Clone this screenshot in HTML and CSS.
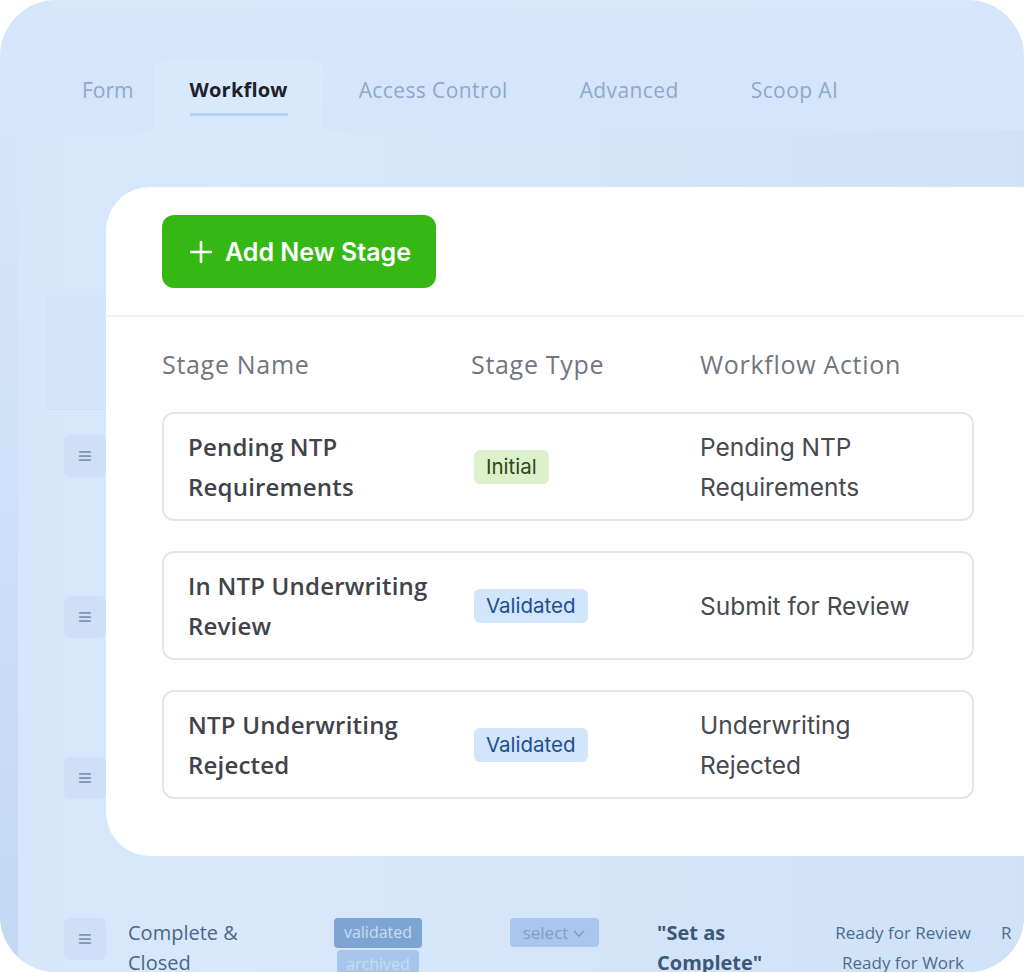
FILE: index.html
```html
<!DOCTYPE html>
<html lang="en">
<head>
  <meta charset="UTF-8" />
  <meta name="viewport" content="width=device-width, initial-scale=1.0"/>
  <title>Workflow Stages</title>
  <link rel="stylesheet" href="styles.css">
</head>
<body>
  <div class="frame">
    <nav class="tabs">
      <a class="tab tab-first" href="#form">Form</a>
      <a class="tab active" href="#workflow"><span>Workflow</span></a>
      <a class="tab" href="#access">Access Control</a>
      <a class="tab" href="#advanced">Advanced</a>
      <a class="tab" href="#ai">Scoop AI</a>
    </nav>

    <section class="panel">
      <!-- the stage list underneath the edit card -->
      <div class="ghost">
        <div class="ghost-head"></div>
        <div class="ghost-row"><span class="handle">&#8801;</span></div>
        <div class="ghost-row"><span class="handle">&#8801;</span></div>
        <div class="ghost-row"><span class="handle">&#8801;</span></div>
        <div class="ghost-row ghost-last">
          <span class="handle">&#8801;</span>
          <div class="g-name">Complete &amp;<br>Closed</div>
          <div class="g-types">
            <span class="g-badge">validated</span>
            <span class="g-badge g-soft">archived</span>
          </div>
          <div class="g-select">select <svg width="14" height="10" viewBox="0 0 14 10"><path d="M2 3l5 5 5-5" fill="none" stroke="currentColor" stroke-width="1.6"/></svg></div>
          <div class="g-action">"Set as<br>Complete"</div>
          <div class="g-next">
            <span>Ready for Review</span>
            <span>Ready for Work</span>
          </div>
          <div class="g-more">R</div>
        </div>
      </div>

      <div class="card">
        <div class="card-top">
          <button class="add-btn">
            <svg width="22" height="22" viewBox="0 0 22 22"><path d="M11 1v20M1 11h20" stroke="#fff" stroke-width="2.6" stroke-linecap="round"/></svg>
            Add New Stage
          </button>
        </div>
        <div class="stages">
          <div class="cols head">
            <div>Stage Name</div>
            <div>Stage Type</div>
            <div>Workflow Action</div>
          </div>
          <div class="cols stage">
            <div class="name">Pending NTP<br>Requirements</div>
            <div><span class="badge initial">Initial</span></div>
            <div class="action">Pending NTP<br>Requirements</div>
          </div>
          <div class="cols stage">
            <div class="name">In NTP Underwriting<br>Review</div>
            <div><span class="badge validated">Validated</span></div>
            <div class="action">Submit for Review</div>
          </div>
          <div class="cols stage">
            <div class="name">NTP Underwriting<br>Rejected</div>
            <div><span class="badge validated">Validated</span></div>
            <div class="action">Underwriting<br>Rejected</div>
          </div>
        </div>
      </div>
    </section>
  </div>
</body>
</html>
```

FILE: styles.css
```css
* { box-sizing: border-box; margin: 0; padding: 0; }
body { background: white; font-family: "Open Sans", sans-serif; overflow: hidden; }

.frame {
  width: 1024px;
  height: 972px;
  border-radius: 56px;
  overflow: hidden;
  background: linear-gradient(180deg, #d6e7fc 0%, #cde1f8 50%, #c2d9f3 100%);
  display: flex;
  flex-direction: column;
}

/* tabs */
.tabs { flex: none; display: flex; padding: 62px 0 0 46px; height: 130px; }
.tab {
  display: flex;
  align-items: center;
  padding: 0 36px 12px;
  font-size: 21px;
  color: #8fa8c8;
  text-decoration: none;
  letter-spacing: 0.4px;
}
.tab-first { padding-right: 20px; letter-spacing: 0; }
.tab.active {
  background: #d9e9fd;
  border-radius: 8px 8px 0 0;
  color: #1d2129;
  font-weight: 700;
  font-size: 20px;
  letter-spacing: 0.2px;
  padding: 0 35px 0 36px;
  align-items: flex-start;
}
.tab.active span { padding-top: 14px; height: 54px; border-bottom: 3px solid #b5d1f5; }

/* panel under the tabs */
.panel {
  position: relative;
  flex: 1;
  min-height: 0;
  margin-left: 18px;
  border-radius: 10px 0 0 0;
  background: linear-gradient(90deg, #d5e6fb 0%, #d9e8fb 20%, #cfe2f8 100%);
}

.ghost { padding: 165px 0 0 28px; }
.ghost-head { height: 115px; background: rgba(205, 224, 247, 0.25); border-bottom: 1px solid rgba(196, 216, 242, 0.5); }
.ghost-row { height: 161px; display: flex; align-items: flex-start; padding: 25px 0 0 18px; }
.handle {
  width: 42px;
  height: 42px;
  border-radius: 6px;
  background: #cee0f7;
  color: #7f95b1;
  font-size: 24px;
  line-height: 40px;
  text-align: center;
  flex: none;
}
.ghost-last { color: #4a6789; font-size: 20px; }
.g-name { margin: 0 0 0 22px; width: 206px; line-height: 30px; }
.g-types { display: flex; flex-direction: column; gap: 2px; width: 176px; }
.g-badge {
  width: 88px;
  height: 30px;
  border-radius: 4px;
  background: #7ea4d3;
  color: #c9dcf3;
  font-size: 16px;
  text-align: center;
  line-height: 29px;
}
.g-soft { background: #a8c6eb; width: 82px; margin-left: 3px; }
.g-select {
  width: 89px;
  height: 29px;
  border-radius: 4px;
  background: #a9c6ec;
  color: #7f9ec6;
  font-size: 17px;
  display: flex;
  align-items: center;
  justify-content: center;
  gap: 4px;
}
.g-action { margin-left: 58px; width: 166px; font-weight: 700; color: #3d5779; line-height: 30px; }
.g-next { display: flex; flex-direction: column; align-items: center; font-size: 17px; line-height: 30px; color: #4d6b8f; width: 160px; }
.g-more { margin-left: 18px; font-size: 17px; line-height: 30px; color: #4d6b8f; }

/* edit card over the list */
.card {
  position: absolute;
  left: 88px;
  top: 57px;
  right: -40px;
  height: 669px;
  background: white;
  border-radius: 44px;
}
.card-top { padding: 28px 0 27px 56px; border-bottom: 2px solid #f0f1f3; }
.add-btn {
  display: flex;
  align-items: center;
  gap: 13px;
  height: 73px;
  padding: 0 25px 0 28px;
  border: none;
  border-radius: 12px;
  background: #35b814;
  color: white;
  font-family: Inter, sans-serif;
  font-size: 25px;
  font-weight: 600;
}

.stages { padding: 24px 90px 0 56px; display: flex; flex-direction: column; gap: 30px; }
.cols { display: grid; grid-template-columns: 309px 229px 1fr; align-items: center; }
.head { color: #71767f; font-size: 25px; height: 45px; margin-bottom: -4px; letter-spacing: 0.7px; }
.stage {
  height: 109px;
  padding-left: 24px;
  border: 2px solid #e6e7ea;
  border-radius: 12px;
  grid-template-columns: 286px 226px 1fr;
}
.name { font-size: 24px; font-weight: 600; color: #40434a; line-height: 40px; letter-spacing: 0.2px; }
.action { font-family: Inter, sans-serif; font-size: 24.5px; color: #46494f; line-height: 40px; }
.badge {
  display: inline-block;
  height: 34px;
  padding: 0 12px;
  border-radius: 6px;
  font-family: Inter, sans-serif;
  font-size: 20.5px;
  line-height: 34px;
}
.initial { background: #dcf0cc; color: #2a4816; }
.validated { background: #d3e5fb; color: #1d4f91; }
```
